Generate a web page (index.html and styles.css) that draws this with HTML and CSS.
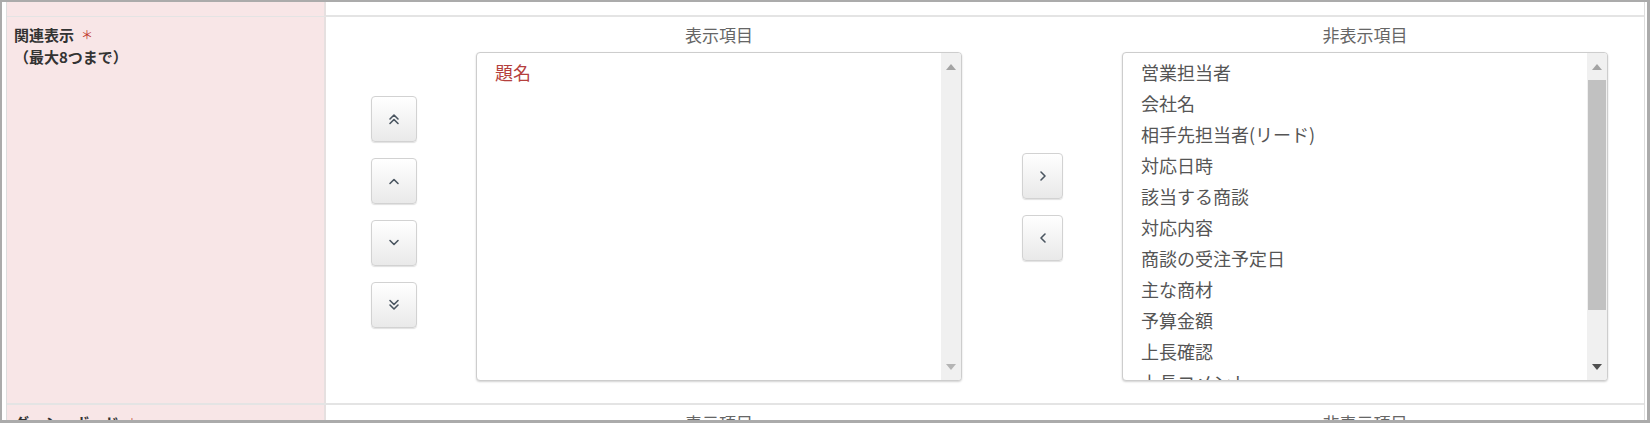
FILE: index.html
```html
<!DOCTYPE html>
<html lang="ja">
<head>
<meta charset="UTF-8">
<title>関連表示設定</title>
<link rel="stylesheet" href="styles.css">
</head>
<body>
  <div class="frame">
    <div class="table">
      <div class="row row-cut">
        <div class="label-cell"></div>
        <div class="field-cell"></div>
      </div>

      <div class="row">
        <div class="label-cell">
          <div>関連表示<span class="req">＊</span></div>
          <div>（最大8つまで）</div>
        </div>
        <div class="field-cell">
          <div class="btn-col sort-col">
            <button class="btn"><svg width="12" height="12" viewBox="0 0 12 12"><polyline points="2,6 6,2 10,6"/><polyline points="2,10.5 6,6.5 10,10.5"/></svg></button>
            <button class="btn"><svg width="12" height="8" viewBox="0 0 12 8"><polyline points="2,6.5 6,2.5 10,6.5"/></svg></button>
            <button class="btn"><svg width="12" height="8" viewBox="0 0 12 8"><polyline points="2,1.5 6,5.5 10,1.5"/></svg></button>
            <button class="btn"><svg width="12" height="12" viewBox="0 0 12 12"><polyline points="2,1.5 6,5.5 10,1.5"/><polyline points="2,6 6,10 10,6"/></svg></button>
          </div>
          <div class="list-col">
            <div class="list-title">表示項目</div>
            <div class="listbox">
              <ul class="items">
                <li class="selected">題名</li>
              </ul>
              <div class="scrollbar">
                <div class="sb-btn"><span class="tri-up"></span></div>
                <div class="sb-track"></div>
                <div class="sb-btn"><span class="tri-down"></span></div>
              </div>
            </div>
          </div>
          <div class="btn-col move-col">
            <button class="btn narrow"><svg width="8" height="12" viewBox="0 0 8 12"><polyline points="2,2 6,6 2,10"/></svg></button>
            <button class="btn narrow"><svg width="8" height="12" viewBox="0 0 8 12"><polyline points="6,2 2,6 6,10"/></svg></button>
          </div>
          <div class="list-col">
            <div class="list-title">非表示項目</div>
            <div class="listbox">
              <ul class="items">
                <li>営業担当者</li>
                <li>会社名</li>
                <li>相手先担当者(リード)</li>
                <li>対応日時</li>
                <li>該当する商談</li>
                <li>対応内容</li>
                <li>商談の受注予定日</li>
                <li>主な商材</li>
                <li>予算金額</li>
                <li>上長確認</li>
                <li>上長コメント</li>
                <li>次回対応日</li>
              </ul>
              <div class="scrollbar">
                <div class="sb-btn"><span class="tri-up"></span></div>
                <div class="sb-track"><div class="sb-thumb"></div></div>
                <div class="sb-btn"><span class="tri-down active"></span></div>
              </div>
            </div>
          </div>
        </div>
      </div>

      <div class="row">
        <div class="label-cell">
          <div>ダッシュボード<span class="req">＊</span></div>
        </div>
        <div class="field-cell">
          <div class="btn-col sort-col"></div>
          <div class="list-col">
            <div class="list-title">表示項目</div>
          </div>
          <div class="btn-col move-col"></div>
          <div class="list-col">
            <div class="list-title">非表示項目</div>
          </div>
        </div>
      </div>
    </div>
  </div>
</body>
</html>
```

FILE: styles.css
```css
html, body {
  margin: 0;
  background: #fff;
}
body {
  font-family: "Noto Sans CJK JP", "Noto Sans", sans-serif;
  color: #333;
}
.frame {
  box-sizing: border-box;
  width: 1650px;
  height: 423px;
  overflow: hidden;
  border-style: solid;
  border-color: #ababab;
  border-width: 2px 3px 3px 2px;
  padding: 0 2px 0 4px;
}
.table {
  border-left: 1px solid #dedede;
  border-right: 1px solid #dedede;
}
.row {
  display: flex;
  border-bottom: 2px solid #e4e4e4;
}
.row-cut {
  height: 13px;
}
.label-cell {
  box-sizing: border-box;
  width: 319px;
  flex-shrink: 0;
  background: #f8e6e7;
  border-right: 2px solid #e6e0e0;
  padding: 7px 7px;
  font-size: 15px;
  line-height: 22px;
  font-weight: bold;
  color: #333;
}
.req {
  color: #c0392b;
  font-weight: normal;
  font-size: 12px;
  margin-left: 7px;
  vertical-align: 1px;
}
.field-cell {
  flex: 1;
  display: flex;
  align-items: flex-start;
  padding: 5px 0 22px 45px;
}
.btn-col {
  display: flex;
  flex-direction: column;
  gap: 16px;
  width: 46px;
  flex-shrink: 0;
}
.sort-col {
  margin-top: 74px;
  margin-right: 59px;
}
.move-col {
  width: 41px;
  margin-top: 131px;
  margin-left: 60px;
  margin-right: 59px;
}
.btn {
  box-sizing: border-box;
  width: 46px;
  height: 46px;
  padding: 0;
  display: flex;
  align-items: center;
  justify-content: center;
  border: 1px solid #d2d2d2;
  border-radius: 4px;
  background: linear-gradient(#ffffff, #e9e9e9);
  box-shadow: 0 1px 1px rgba(0, 0, 0, 0.12);
}
.btn.narrow {
  width: 41px;
}
.btn svg {
  fill: none;
  stroke: #4a5560;
  stroke-width: 1.6;
  stroke-linecap: round;
  stroke-linejoin: round;
}
.list-col {
  width: 486px;
  flex-shrink: 0;
}
.list-title {
  text-align: center;
  font-size: 17px;
  line-height: 26px;
  color: #666;
  margin-bottom: 4px;
}
.listbox {
  box-sizing: border-box;
  height: 329px;
  display: flex;
  border: 1px solid #cdcdcd;
  border-radius: 4px;
  overflow: hidden;
  box-shadow: 0 1px 2px rgba(0, 0, 0, 0.18);
  background: #fff;
}
.items {
  flex: 1;
  margin: 0;
  padding: 4px 18px;
  list-style: none;
  overflow: hidden;
  font-size: 18px;
  line-height: 31px;
  color: #555;
}
.items .selected {
  color: #b5403d;
}
.scrollbar {
  width: 20px;
  flex-shrink: 0;
  display: flex;
  flex-direction: column;
  background: #f0f0f0;
}
.sb-btn {
  height: 27px;
  display: flex;
  align-items: center;
  justify-content: center;
}
.sb-track {
  flex: 1;
  padding: 0 1px;
}
.sb-thumb {
  height: 230px;
  background: #c1c1c1;
}
.tri-up {
  width: 0;
  height: 0;
  border-left: 5px solid transparent;
  border-right: 5px solid transparent;
  border-bottom: 6px solid #a3a3a3;
}
.tri-down {
  width: 0;
  height: 0;
  border-left: 5px solid transparent;
  border-right: 5px solid transparent;
  border-top: 6px solid #b4b4b4;
}
.tri-down.active {
  border-top-color: #505050;
}
```
